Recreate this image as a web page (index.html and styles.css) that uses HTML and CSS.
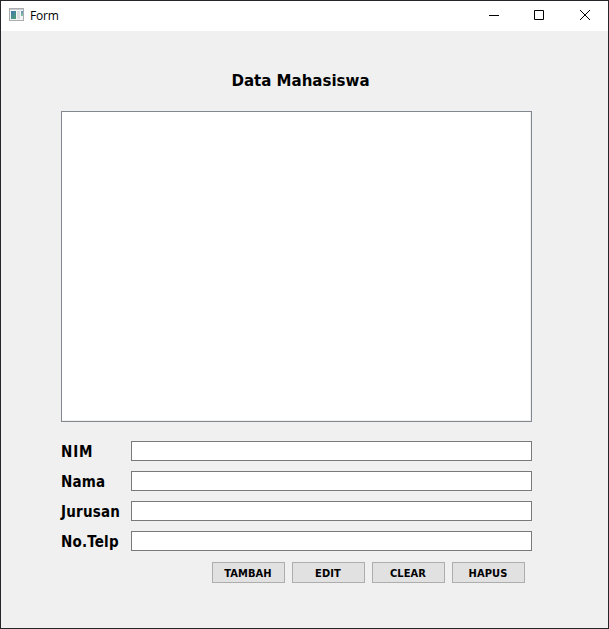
FILE: index.html
```html
<!DOCTYPE html>
<html lang="id">
<head>
<meta charset="utf-8">
<title>Form</title>
<link rel="stylesheet" href="styles.css">
</head>
<body>
<div class="window">
  <header class="titlebar">
    <svg class="app-icon" width="16" height="14" viewBox="0 0 16 14">
      <defs>
        <linearGradient id="g" x1="0" y1="0" x2=".6" y2="1"><stop offset="0" stop-color="#3f78b5"/><stop offset="1" stop-color="#4e9a78"/></linearGradient>
        <linearGradient id="h" x1="0" y1="0" x2="0" y2="1"><stop offset="0" stop-color="#5b93bd"/><stop offset="1" stop-color="#8fc0a0"/></linearGradient>
      </defs>
      <rect x=".5" y=".5" width="14" height="12" fill="#f4f4f4" stroke="#a9acb0"/>
      <rect x="1" y="1" width="13" height="1" fill="#c9cdd2"/>
      <rect x="2" y="3" width="5" height="8" fill="url(#g)"/>
      <rect x="8" y="3" width="3" height="8" fill="#dcdfe2"/>
      <rect x="12" y="3" width="2" height="5" fill="url(#h)"/>
    </svg>
    <span class="caption">Form</span>
    <div class="controls">
      <svg width="46" height="29" viewBox="0 0 46 29"><path d="M19 14.500h10"/></svg>
      <svg width="46" height="29" viewBox="0 0 46 29"><path d="M18.500 9.500h9v9h-9z"/></svg>
      <svg width="46" height="29" viewBox="0 0 46 29"><path d="M18 9l10 10M28 9l-10 10"/></svg>
    </div>
  </header>
  <main class="content">
    <h1><span>Data Mahasiswa</span></h1>
    <div class="table"></div>
    <form class="fields">
      <label class="wide" for="nim"><span>NIM</span></label><input id="nim">
      <label for="nama"><span>Nama</span></label><input id="nama">
      <label for="jurusan"><span>Jurusan</span></label><input id="jurusan">
      <label for="telp"><span>No.Telp</span></label><input id="telp">
    </form>
    <div class="actions">
      <button>TAMBAH</button><button>EDIT</button><button>CLEAR</button><button>HAPUS</button>
    </div>
  </main>
</div>
</body>
</html>
```
FILE: styles.css
```css
* { box-sizing: border-box; }
body { margin: 0; }
.window { width: 609px; height: 629px; border: 1px solid #262428; background: #f0f0f0; color: #000; overflow: hidden; }
.titlebar { height: 30px; background: #fff; display: flex; align-items: center; padding-left: 8px; }
.app-icon { display: block; margin-bottom: 2px; }
.caption { font: 12px/16px "Open Sans", "Noto Sans", sans-serif; letter-spacing: -.2px; margin-left: 5px; }
.controls { display: flex; margin-left: auto; height: 29px; align-self: flex-start; }
.controls path { fill: none; stroke: #000; stroke-width: 1; }
.content { padding: 38px 76px 0 60px; font-family: "DejaVu Sans Condensed", "DejaVu Sans", sans-serif; font-weight: 700; }
h1 { margin: 0 0 21px; padding-left: 8px; height: 21px; font-size: 16.7px; line-height: 22px; text-align: center; }
.table { height: 311px; border: 1px solid #828790; background: #fff; box-shadow: inset -1px -1px #f0f0f0; }
.fields { display: grid; grid-template-columns: 70px 401px; row-gap: 10px; margin-top: 19px; }
label { font-size: 15px; line-height: 22px; height: 20px; letter-spacing: .2px; white-space: nowrap; }
.wide { letter-spacing: .9px; }
input { height: 20px; width: 401px; padding: 0 2px; border: 1px solid #7a7a7a; border-radius: 0; background: #fff; }
.actions { display: flex; gap: 7px; margin: 11px 7px 0; justify-content: flex-end; }
button { width: 73px; height: 21px; padding: 1px 1px 0 0; border: 1px solid #adadad; border-radius: 0; background: #e1e1e1; color: #000; font: bold 11px/19px "DejaVu Sans Condensed", "DejaVu Sans", sans-serif; letter-spacing: .1px; }
```
